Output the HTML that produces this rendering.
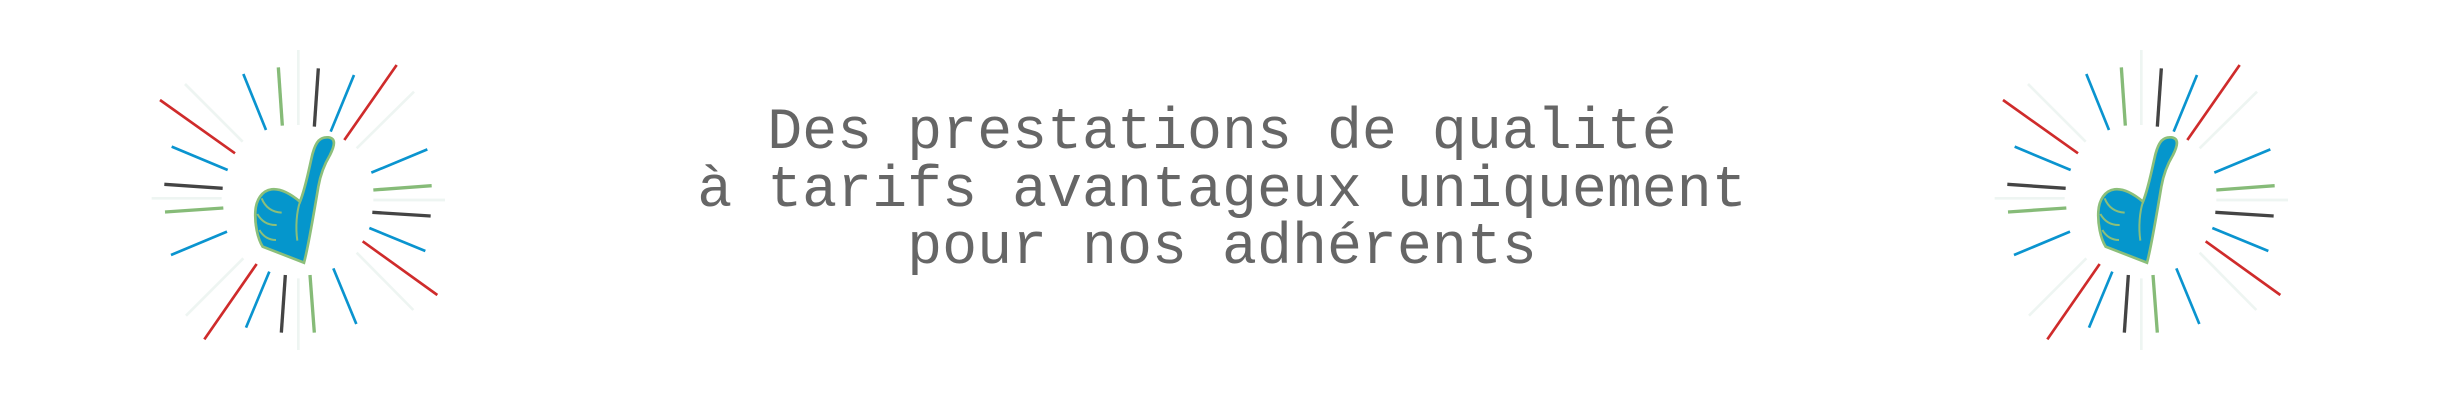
<!DOCTYPE html>
<html><head><meta charset="utf-8"><style>
html,body{margin:0;padding:0;background:#fff;width:2440px;height:400px;overflow:hidden;position:relative}
.t{position:absolute;left:0;width:2444px;text-align:center;font-family:"Liberation Mono",monospace;font-size:58.3px;color:#666;white-space:pre;line-height:57.5px;top:104px}
svg{position:absolute;top:30px}
</style></head><body>
<div class="t">Des prestations de qualité
à tarifs avantageux uniquement
pour nos adhérents</div>
<svg width="360" height="340" viewBox="0 0 1080 1020" style="left:100px">
<g stroke-width="8" fill="none">
<g stroke="#eef5f2"><line x1="595" y1="60" x2="595" y2="285"/><line x1="595" y1="745" x2="595" y2="960"/><line x1="155" y1="505" x2="365" y2="505"/><line x1="820" y1="510" x2="1035" y2="510"/><line x1="255" y1="162" x2="428" y2="335"/><line x1="942" y1="185" x2="770" y2="355"/><line x1="430" y1="685" x2="258" y2="857"/><line x1="770" y1="668" x2="940" y2="840"/></g>
<g stroke="#0a94cf"><line x1="430" y1="132" x2="498" y2="300"/><line x1="762" y1="135" x2="692" y2="305"/><line x1="215" y1="350" x2="383" y2="420"/><line x1="213" y1="675" x2="381" y2="605"/><line x1="982" y1="358" x2="814" y2="428"/><line x1="808" y1="594" x2="976" y2="663"/><line x1="508" y1="725" x2="438" y2="893"/><line x1="700" y1="715" x2="769" y2="882"/></g>
<g stroke="#86bb78" stroke-width="10"><line x1="535" y1="112" x2="547" y2="287"/><line x1="195" y1="546" x2="370" y2="534"/><line x1="820" y1="480" x2="995" y2="467"/><line x1="630" y1="735" x2="643" y2="908"/></g>
<g stroke="#444" stroke-width="10"><line x1="655" y1="115" x2="643" y2="290"/><line x1="193" y1="463" x2="368" y2="475"/><line x1="817" y1="547" x2="992" y2="558"/><line x1="556" y1="735" x2="544" y2="908"/></g>
<g stroke="#cf2b2b"><line x1="890" y1="105" x2="733" y2="330"/><line x1="180" y1="210" x2="405" y2="370"/><line x1="788" y1="634" x2="1012" y2="795"/><line x1="470" y1="702" x2="313" y2="928"/></g>
<path d="M612 698 C625 650 640 560 655 470 C662 430 675 400 690 375 C705 345 708 325 685 322 C660 320 648 335 638 370 C628 410 618 470 600 515 C570 490 540 475 515 478 C485 482 468 510 466 545 C464 580 472 625 488 650 Z" fill="#0596cc" stroke="#8cbf7a"/>
<g stroke="#8cbf7a" stroke-width="6"><path d="M600 515 C590 545 586 590 592 632"/><path d="M485 505 C495 530 515 546 545 548"/><path d="M472 552 C485 575 505 586 530 585"/><path d="M478 600 C490 620 505 630 528 630"/></g>
</g></svg>
<svg width="360" height="340" viewBox="0 0 1080 1020" style="left:1943px">
<g stroke-width="8" fill="none">
<g stroke="#eef5f2"><line x1="595" y1="60" x2="595" y2="285"/><line x1="595" y1="745" x2="595" y2="960"/><line x1="155" y1="505" x2="365" y2="505"/><line x1="820" y1="510" x2="1035" y2="510"/><line x1="255" y1="162" x2="428" y2="335"/><line x1="942" y1="185" x2="770" y2="355"/><line x1="430" y1="685" x2="258" y2="857"/><line x1="770" y1="668" x2="940" y2="840"/></g>
<g stroke="#0a94cf"><line x1="430" y1="132" x2="498" y2="300"/><line x1="762" y1="135" x2="692" y2="305"/><line x1="215" y1="350" x2="383" y2="420"/><line x1="213" y1="675" x2="381" y2="605"/><line x1="982" y1="358" x2="814" y2="428"/><line x1="808" y1="594" x2="976" y2="663"/><line x1="508" y1="725" x2="438" y2="893"/><line x1="700" y1="715" x2="769" y2="882"/></g>
<g stroke="#86bb78" stroke-width="10"><line x1="535" y1="112" x2="547" y2="287"/><line x1="195" y1="546" x2="370" y2="534"/><line x1="820" y1="480" x2="995" y2="467"/><line x1="630" y1="735" x2="643" y2="908"/></g>
<g stroke="#444" stroke-width="10"><line x1="655" y1="115" x2="643" y2="290"/><line x1="193" y1="463" x2="368" y2="475"/><line x1="817" y1="547" x2="992" y2="558"/><line x1="556" y1="735" x2="544" y2="908"/></g>
<g stroke="#cf2b2b"><line x1="890" y1="105" x2="733" y2="330"/><line x1="180" y1="210" x2="405" y2="370"/><line x1="788" y1="634" x2="1012" y2="795"/><line x1="470" y1="702" x2="313" y2="928"/></g>
<path d="M612 698 C625 650 640 560 655 470 C662 430 675 400 690 375 C705 345 708 325 685 322 C660 320 648 335 638 370 C628 410 618 470 600 515 C570 490 540 475 515 478 C485 482 468 510 466 545 C464 580 472 625 488 650 Z" fill="#0596cc" stroke="#8cbf7a"/>
<g stroke="#8cbf7a" stroke-width="6"><path d="M600 515 C590 545 586 590 592 632"/><path d="M485 505 C495 530 515 546 545 548"/><path d="M472 552 C485 575 505 586 530 585"/><path d="M478 600 C490 620 505 630 528 630"/></g>
</g></svg>
</body></html>
